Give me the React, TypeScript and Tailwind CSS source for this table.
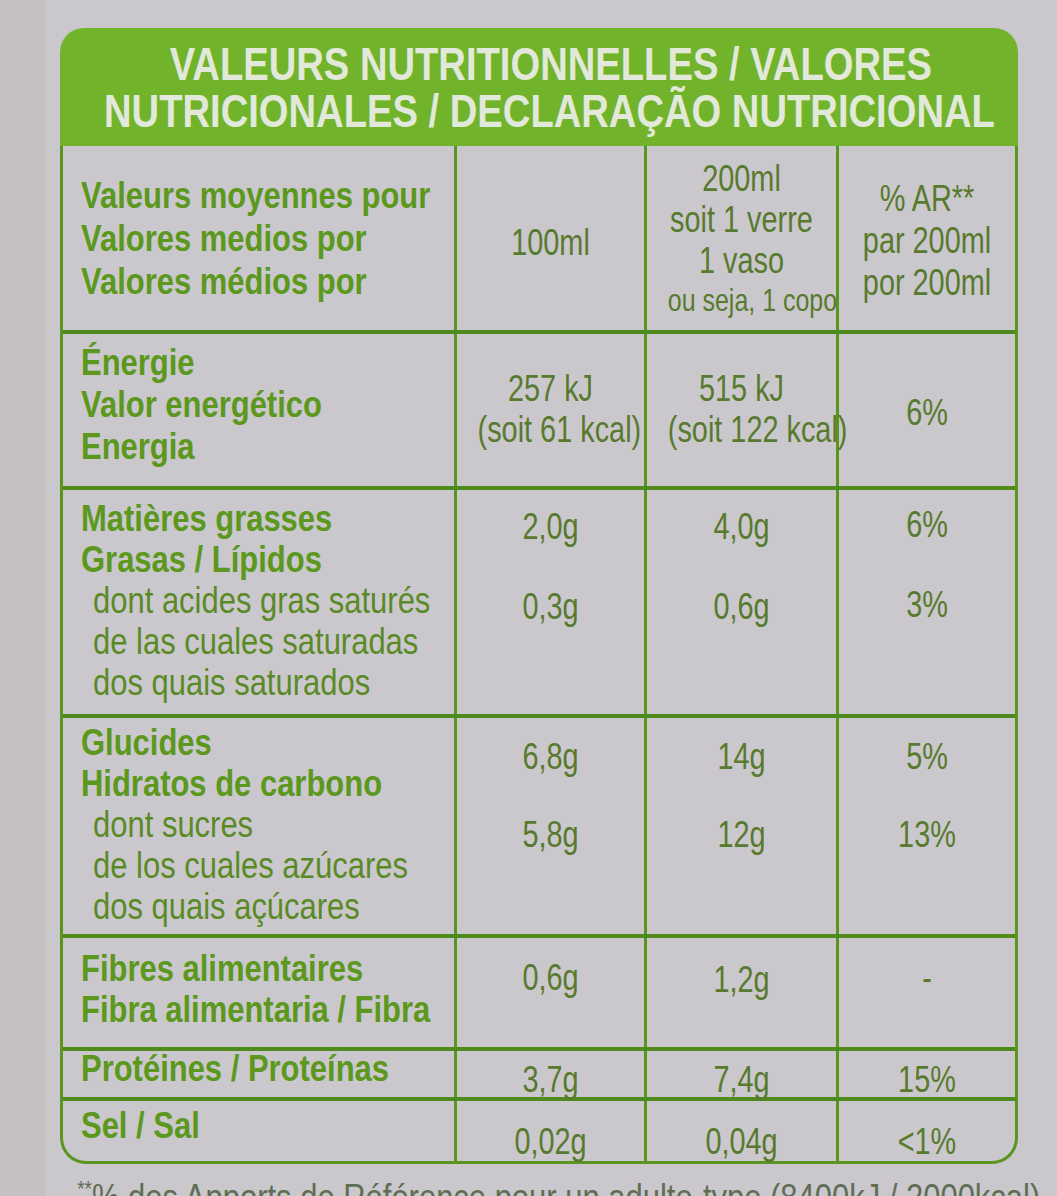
import React from "react";

const F = { fontFamily: '"Liberation Sans", Arial, sans-serif' };

function Label({ children }: { children: React.ReactNode }) {
  return (
    <div className="origin-left scale-x-[0.86] whitespace-nowrap font-bold text-[#5b981d]">
      {children}
    </div>
  );
}
function Sub({ children }: { children: React.ReactNode }) {
  return (
    <div className="origin-left scale-x-[0.86] whitespace-nowrap pl-[14px] font-normal text-[#5a8a26]">
      {children}
    </div>
  );
}
function Val({ children, cls = "" }: { children: React.ReactNode; cls?: string }) {
  return (
    <div className={"scale-x-[0.78] whitespace-nowrap text-center text-[#587a2e] " + cls}>
      {children}
    </div>
  );
}

type Row = {
  h: string;
  left: React.ReactNode;
  c1: React.ReactNode;
  c2: React.ReactNode;
  c3: React.ReactNode;
  pad: string;
  last?: boolean;
};

export default function App() {
  const rows: Row[] = [
    {
      h: "h-[188px]",
      pad: "pt-[28px]",
      left: (
        <div className="leading-[43px]">
          <Label>Valeurs moyennes pour</Label>
          <Label>Valores medios por</Label>
          <Label>Valores médios por</Label>
        </div>
      ),
      c1: <Val cls="pt-[48px] text-[37px]">100ml</Val>,
      c2: (
        <div className="-mt-[16px]">
          <Val cls="text-[37px]">200ml</Val>
          <Val cls="text-[37px]">soit 1 verre</Val>
          <Val cls="text-[37px]">1 vaso</Val>
          <Val cls="text-[32px] leading-[38px]">ou seja, 1 copo</Val>
        </div>
      ),
      c3: (
        <div className="pt-[4px] leading-[42px]">
          <Val cls="text-[37px]">% AR**</Val>
          <Val cls="text-[37px]">par 200ml</Val>
          <Val cls="text-[37px]">por 200ml</Val>
        </div>
      ),
    },
    {
      h: "h-[156px]",
      pad: "pt-[8px]",
      left: (
        <div className="leading-[42px]">
          <Label>Énergie</Label>
          <Label>Valor energético</Label>
          <Label>Energia</Label>
        </div>
      ),
      c1: (
        <div className="pt-[26px]">
          <Val cls="text-[37px]">257 kJ</Val>
          <Val cls="text-[37px]">(soit 61 kcal)</Val>
        </div>
      ),
      c2: (
        <div className="pt-[26px]">
          <Val cls="text-[37px]">515 kJ</Val>
          <Val cls="text-[37px]">(soit 122 kcal)</Val>
        </div>
      ),
      c3: <Val cls="pt-[50px] text-[37px]">6%</Val>,
    },
    {
      h: "h-[228px]",
      pad: "pt-[8px]",
      left: (
        <>
          <Label>Matières grasses</Label>
          <Label>Grasas / Lípidos</Label>
          <Sub>dont acides gras saturés</Sub>
          <Sub>de las cuales saturadas</Sub>
          <Sub>dos quais saturados</Sub>
        </>
      ),
      c1: (
        <div className="pt-[8px]">
          <Val cls="text-[37px]">2,0g</Val>
          <Val cls="pt-[39px] text-[37px]">0,3g</Val>
        </div>
      ),
      c2: (
        <div className="pt-[8px]">
          <Val cls="text-[37px]">4,0g</Val>
          <Val cls="pt-[39px] text-[37px]">0,6g</Val>
        </div>
      ),
      c3: (
        <div className="pt-[6px]">
          <Val cls="text-[37px]">6%</Val>
          <Val cls="pt-[39px] text-[37px]">3%</Val>
        </div>
      ),
    },
    {
      h: "h-[220px]",
      pad: "pt-[4px]",
      left: (
        <>
          <Label>Glucides</Label>
          <Label>Hidratos de carbono</Label>
          <Sub>dont sucres</Sub>
          <Sub>de los cuales azúcares</Sub>
          <Sub>dos quais açúcares</Sub>
        </>
      ),
      c1: (
        <div className="pt-[14px]">
          <Val cls="text-[37px]">6,8g</Val>
          <Val cls="pt-[37px] text-[37px]">5,8g</Val>
        </div>
      ),
      c2: (
        <div className="pt-[14px]">
          <Val cls="text-[37px]">14g</Val>
          <Val cls="pt-[37px] text-[37px]">12g</Val>
        </div>
      ),
      c3: (
        <div className="pt-[14px]">
          <Val cls="text-[37px]">5%</Val>
          <Val cls="pt-[37px] text-[37px]">13%</Val>
        </div>
      ),
    },
    {
      h: "h-[113px]",
      pad: "pt-[10px]",
      left: (
        <>
          <Label>Fibres alimentaires</Label>
          <Label>Fibra alimentaria / Fibra</Label>
        </>
      ),
      c1: <Val cls="pt-[9px] text-[37px]">0,6g</Val>,
      c2: <Val cls="pt-[11px] text-[37px]">1,2g</Val>,
      c3: <Val cls="pt-[9px] text-[37px]">-</Val>,
    },
    {
      h: "h-[50px]",
      pad: "pt-[0px]",
      left: (
        <div className="-mt-[3px]">
          <Label>Protéines / Proteínas</Label>
        </div>
      ),
      c1: <Val cls="pt-[8px] text-[37px]">3,7g</Val>,
      c2: <Val cls="pt-[8px] text-[37px]">7,4g</Val>,
      c3: <Val cls="pt-[8px] text-[37px]">15%</Val>,
    },
    {
      h: "h-[60px]",
      pad: "pt-[4px]",
      last: true,
      left: <Label>Sel / Sal</Label>,
      c1: <Val cls="pt-[16px] text-[37px]">0,02g</Val>,
      c2: <Val cls="pt-[16px] text-[37px]">0,04g</Val>,
      c3: <Val cls="pt-[16px] text-[37px]">&lt;1%</Val>,
    },
  ];

  return (
    <div className="relative h-[1196px] w-[1057px] overflow-hidden bg-[#cac8cc]" style={F}>
      <div className="absolute left-0 top-0 h-full w-[46px] bg-[#c6c0c2]" />
      <div className="relative pl-[60px] pt-[28px]">
        <div className="w-[958px]">
          <div className="flex h-[118px] flex-col items-center justify-center rounded-t-[24px] bg-[#71b42c] pt-[2px] text-[46px] font-bold leading-[47px] text-[#e2e8da]">
            <div className="scale-x-[0.83] whitespace-nowrap pl-[28px]">VALEURS NUTRITIONNELLES / VALORES</div>
            <div className="scale-x-[0.83] whitespace-nowrap pl-[26px]">NUTRICIONALES / DECLARAÇÃO NUTRICIONAL</div>
          </div>
          <div className="rounded-b-[26px] border-x-[3px] border-b-[3px] border-[#5a961f] text-[36px] leading-[41px]">
            {rows.map((r, i) => (
              <div
                key={i}
                className={"flex " + r.h + (r.last ? "" : " border-b-[4px] border-[#4f8a1c]")}
              >
                <div className={"w-[394px] shrink-0 border-r-[3px] border-[#5a961f] pl-[18px] " + r.pad}>
                  {r.left}
                </div>
                <div className={"w-[190px] shrink-0 border-r-[3px] border-[#5a961f] " + r.pad}>{r.c1}</div>
                <div className={"w-[192px] shrink-0 border-r-[3px] border-[#5a961f] " + r.pad}>{r.c2}</div>
                <div className={"flex-1 " + r.pad}>{r.c3}</div>
              </div>
            ))}
          </div>
          <div className="origin-left scale-x-[0.86] whitespace-nowrap pl-[20px] pt-[14px] text-[36px] leading-[40px] text-[#5f6d55]">
            <span className="align-top text-[22px] leading-[22px]">**</span>% des Apports de Référence pour un adulte-type (8400kJ / 2000kcal)
          </div>
        </div>
      </div>
    </div>
  );
}
